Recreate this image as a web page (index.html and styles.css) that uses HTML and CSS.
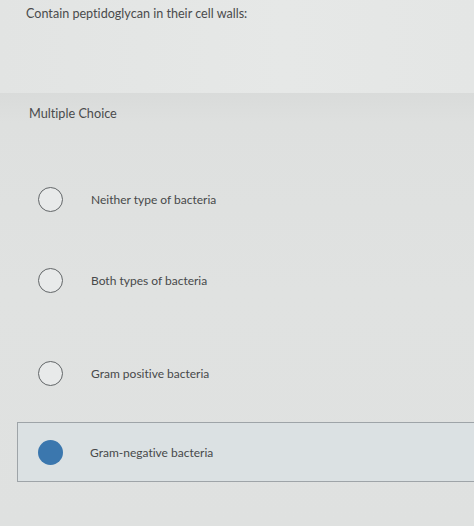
FILE: index.html
```html
<!DOCTYPE html>
<html>
<head>
<meta charset="utf-8">
<link rel="stylesheet" href="styles.css">
</head>
<body>
<div class="page">
  <section class="question">
    <p class="prompt">Contain peptidoglycan in their cell walls:</p>
  </section>
  <section class="answers">
    <div class="label">Multiple Choice</div>
    <ul class="choices">
      <li class="choice c1"><span class="radio"></span><span class="text">Neither type of bacteria</span></li>
      <li class="choice c2"><span class="radio"></span><span class="text">Both types of bacteria</span></li>
      <li class="choice c3"><span class="radio"></span><span class="text">Gram positive bacteria</span></li>
      <li class="choice selected"><span class="radio"></span><span class="text">Gram-negative bacteria</span></li>
    </ul>
  </section>
</div>
</body>
</html>
```

FILE: styles.css
```css
html, body {
  margin: 0;
  padding: 0;
}
body {
  width: 474px;
  height: 526px;
  overflow: hidden;
  background: #dfe1e0;
  font-family: Lato, "Open Sans", sans-serif;
  font-variant-ligatures: none;
  color: #4b4d4e;
}
.page {
  display: flex;
  flex-direction: column;
  height: 526px;
}
.question {
  height: 93px;
  background: linear-gradient(90deg, #e2e4e3 0%, #e6e8e7 60%, #e4e6e5 100%);
  padding: 0 0 0 26px;
}
.prompt {
  margin: 0;
  padding-top: 4px;
  font-size: 12.6px;
  line-height: 20px;
  color: #4a4b4c;
}
.answers {
  flex: 1;
  background: linear-gradient(180deg, #d9dbda 0px, #dee0df 30px, #e0e2e1 200px, #dfe1e0 100%);
  padding-top: 10px;
}
.label {
  padding-left: 29px;
  font-size: 12.7px;
  line-height: 20px;
  height: 20px;
  color: #4a4b4c;
}
.choices {
  list-style: none;
  margin: 0;
  padding: 0;
}
.choice {
  display: flex;
  align-items: center;
  height: 28px;
  font-size: 12px;
}
.c1 { margin-top: 62px; }
.c2 { margin-top: 53px; }
.c3 { margin-top: 65px; }
.radio {
  box-sizing: border-box;
  width: 25px;
  height: 25px;
  border-radius: 50%;
  border: 1.3px solid #626668;
  background: #e8eaea;
  margin-left: 38px;
  flex: none;
}
.text {
  margin-left: 28px;
  color: #47494a;
}
.selected {
  margin-top: 35px;
  margin-left: 17px;
  height: 58px;
  border: 1px solid #9ea4a8;
  border-right: none;
  background: #dbe1e3;
}
.selected .radio {
  margin-left: 20px;
  border: none;
  background: #3b77ae;
}
.selected .text {
  margin-left: 27px;
}
```
